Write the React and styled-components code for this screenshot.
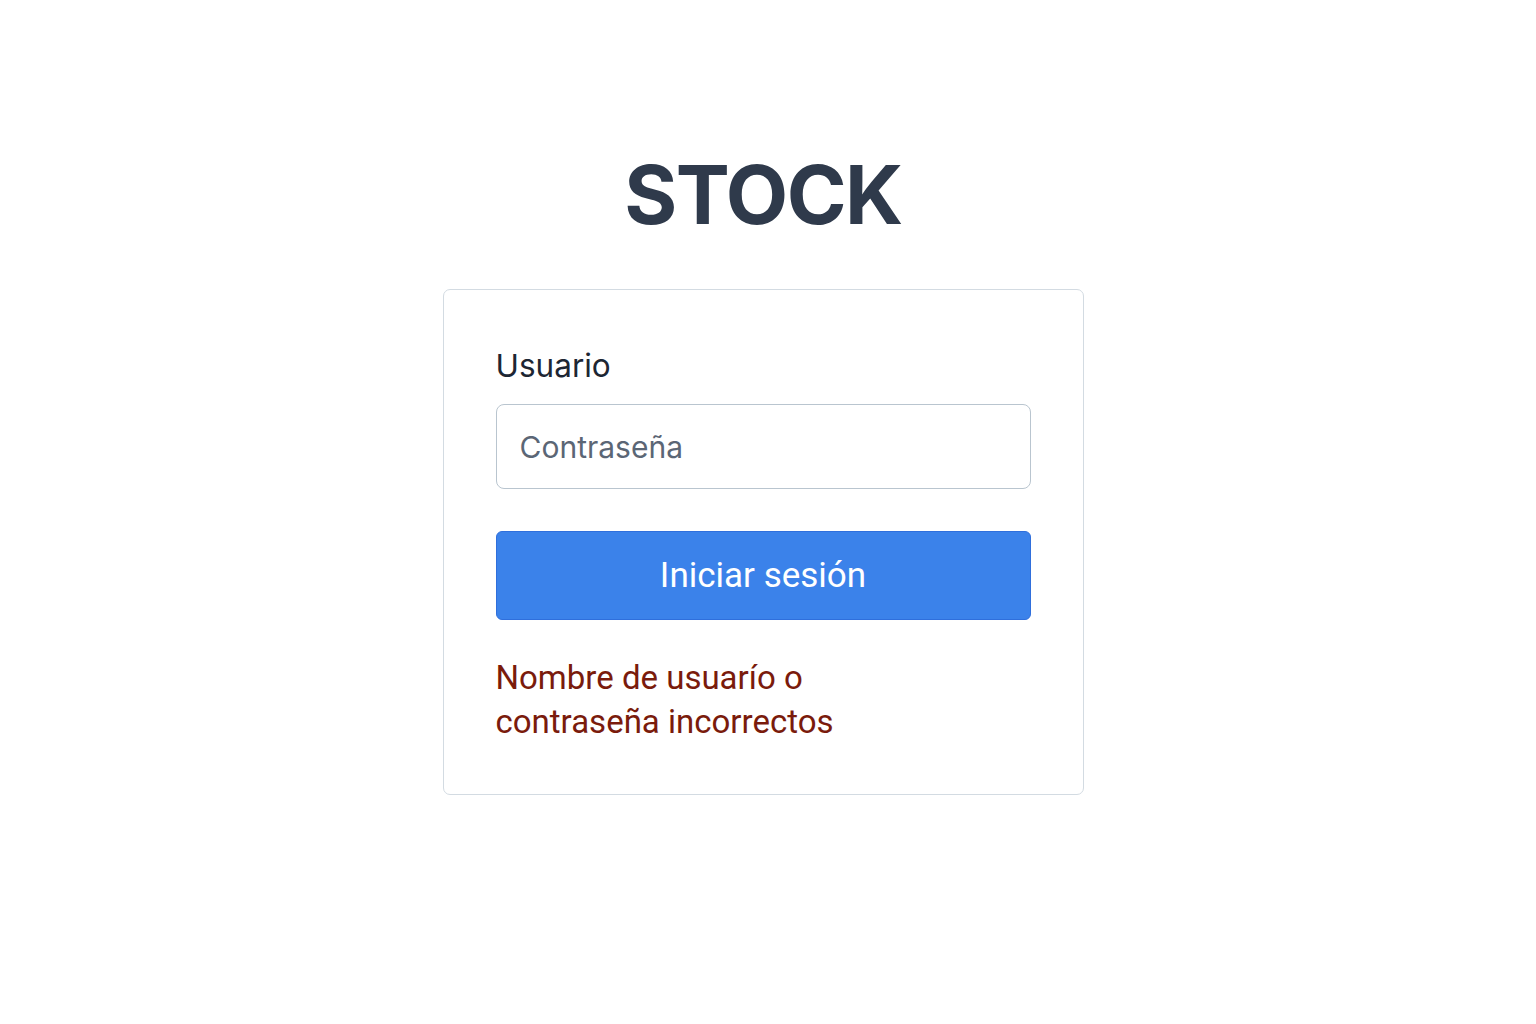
import styled, { createGlobalStyle } from 'styled-components';

const GlobalStyle = createGlobalStyle`
  html, body {
    margin: 0;
    padding: 0;
    background: #ffffff;
    font-family: Inter, "Noto Sans", sans-serif;
  }
`;

const Page = styled.main`
  min-height: 1024px;
  display: flex;
  flex-direction: column;
  align-items: center;
  padding: 148px 10px 0 0;
  box-sizing: border-box;
`;

const Title = styled.h1`
  margin: 0 0 46px;
  font-size: 81px;
  line-height: 95px;
  font-weight: 700;
  letter-spacing: -1.5px;
  color: #2f3a4b;
`;

const Card = styled.form`
  width: 641px;
  box-sizing: border-box;
  border: 1.5px solid #d3dbe2;
  border-radius: 7px;
  padding: 50px 52px 50px;
  display: flex;
  flex-direction: column;
`;

const Label = styled.label`
  font-size: 31.5px;
  line-height: 52px;
  color: #1d2633;
  margin-bottom: 12px;
`;

const Input = styled.input`
  height: 85px;
  box-sizing: border-box;
  border: 1.5px solid #b9c5cf;
  border-radius: 8px;
  padding: 0 23px;
  font-family: inherit;
  font-size: 30px;
  color: #1d2633;
  outline: none;
  &::placeholder {
    color: #5b6675;
  }
`;

const Button = styled.button`
  margin-top: 42px;
  height: 89px;
  border: 1px solid #2f6fdc;
  border-radius: 6px;
  background: #3b82ea;
  color: #ffffff;
  font-family: Roboto, Inter, sans-serif;
  font-size: 35px;
  cursor: pointer;
`;

const ErrorText = styled.p`
  margin: 36px 0 0;
  max-width: 360px;
  font-family: Roboto, Inter, sans-serif;
  font-size: 33px;
  line-height: 44px;
  color: #7a1b0c;
`;

export default function App() {
  return (
    <>
      <GlobalStyle />
      <Page>
        <Title>STOCK</Title>
        <Card onSubmit={(e) => e.preventDefault()}>
          <Label htmlFor="user">Usuario</Label>
          <Input id="user" placeholder="Contraseña" />
          <Button type="submit">Iniciar sesión</Button>
          <ErrorText>Nombre de usuarío o contraseña incorrectos</ErrorText>
        </Card>
      </Page>
    </>
  );
}
